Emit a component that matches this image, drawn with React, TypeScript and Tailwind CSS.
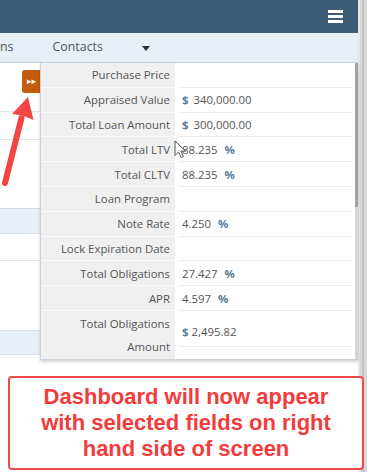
import React from "react";

type Row = { label: string; value?: string; pre?: string; suf?: string };

const rows: Row[] = [
  { label: "Purchase Price" },
  { label: "Appraised Value", pre: "$", value: "340,000.00" },
  { label: "Total Loan Amount", pre: "$", value: "300,000.00" },
  { label: "Total LTV", value: "88.235", suf: "%" },
  { label: "Total CLTV", value: "88.235", suf: "%" },
  { label: "Loan Program" },
  { label: "Note Rate", value: "4.250", suf: "%" },
  { label: "Lock Expiration Date" },
  { label: "Total Obligations", value: "27.427", suf: "%" },
  { label: "APR", value: "4.597", suf: "%" },
];

function Value({ row }: { row: Row }) {
  return (
    <span className="flex items-center">
      {row.pre && <span className="mr-[5px] font-bold text-[#5d7b97]">{row.pre}</span>}
      {row.value && <span>{row.value}</span>}
      {row.suf && <span className="ml-[7px] font-bold text-[#5d7b97]">{row.suf}</span>}
    </span>
  );
}

function DashboardPopup() {
  return (
    <div className="absolute left-[40px] top-[63px] flex h-[297px] w-[318px] border-b border-l border-[#c9d2db] bg-white shadow-[0_2px_3px_rgba(0,0,0,0.18)] font-['Open_Sans',sans-serif] text-[11.4px] text-[#555]">
      <div className="flex flex-1 flex-col">
        {rows.map((row) => (
          <div key={row.label} className="flex h-[24.8px]">
            <div className="flex w-[134px] items-center justify-end border-b border-[#fafafa] bg-[#f0f0f0] pr-[5px]">
              {row.label}
            </div>
            <div className="flex flex-1 px-[3px]">
              <div className="flex flex-1 items-center border-b border-[#ececec] pl-[4px]">
                <Value row={row} />
              </div>
            </div>
          </div>
        ))}
        <div className="flex flex-1">
          <div className="flex w-[134px] flex-col items-end justify-center bg-[#f0f0f0] pr-[5px] leading-[23px]">
            <span>Total Obligations</span>
            <span>Amount</span>
          </div>
          <div className="flex flex-1 flex-col px-[3px]">
            <div className="flex h-[36px] items-end border-b border-[#ececec] pb-[6px] pl-[4px] leading-[16px]">
              <span className="mr-[3px] font-bold text-[#5d7b97]">$</span>
              <span>2,495.82</span>
            </div>
          </div>
        </div>
      </div>
      <div className="flex w-[3px] flex-col bg-[#d6d6d6]">
        <div className="h-[144px] bg-[#a3a3a3]" />
      </div>
    </div>
  );
}

export default function App() {
  return (
    <div className="relative flex h-[472px] w-[367px] overflow-hidden bg-white">
      <div className="flex w-[358px] flex-col">
        {/* header */}
        <header className="flex h-[33px] items-center justify-end bg-[#3d5b75] pr-[15px]">
          <div className="flex w-[15px] flex-col gap-[2.5px]">
            <div className="h-[2.5px] bg-white" />
            <div className="h-[2.5px] bg-white" />
            <div className="h-[2.5px] bg-white" />
          </div>
        </header>

        {/* nav */}
        <nav className="flex h-[30px] items-center border-b border-[#c6d1db] bg-[#e7eef5] font-['Open_Sans',sans-serif] text-[12.4px] text-[#555]">
          <span>ns</span>
          <span className="ml-[39px]">Contacts</span>
          <span className="ml-[39px] mt-[1px] h-0 w-0 border-x-[4px] border-t-[5px] border-x-transparent border-t-[#1e3348]" />
        </nav>

        {/* page content behind the popup */}
        <div className="flex flex-1 flex-col">
          <div className="h-[49px] border-b border-[#e3e7eb] pl-[22px] pt-[7px]">
            <div className="flex h-[23px] w-[22px] items-center rounded-[3px] bg-[#c55b0c] pl-[5px] font-['DejaVu_Sans',sans-serif] text-[9px] font-bold leading-none text-white">
              ▸▸
            </div>
          </div>
          <div className="h-[28px] border-b border-[#e3e7eb]" />
          <div className="h-[68px]" />
          <div className="h-[26px] border-y border-[#d6dfe7] bg-[#e8eff6]" />
          <div className="h-[27px] border-b border-[#e3e7eb]" />
          <div className="h-[69px]" />
          <div className="h-[25px] border-y border-[#d6dfe7] bg-[#e8eff6]" />
          <div className="h-[28px] border-b border-[#eceff2]" />
        </div>
      </div>

      {/* window edge */}
      <div className="flex flex-1 bg-[#d9d9d9]">
        <div className="w-[2px] bg-[#e6e6e6]" />
        <div className="ml-[2px] w-[2px] bg-[#c2c2c2]" />
      </div>

      <DashboardPopup />

      {/* mouse pointer */}
      <svg className="absolute left-[174px] top-[140px]" width="13" height="19" viewBox="0 0 13 19">
        <path
          d="M1 1 L1 15.5 L4.6 12 L7.2 17.6 L9.4 16.6 L6.9 11.2 L11.5 11.2 Z"
          fill="#fff"
          stroke="#555"
          strokeWidth="1"
          strokeLinejoin="round"
        />
      </svg>

      {/* red annotation arrow */}
      <svg className="absolute left-0 top-[90px]" width="40" height="100" viewBox="0 0 40 100">
        <line x1="21.5" y1="28" x2="5" y2="93" stroke="#f24646" strokeWidth="6" strokeLinecap="round" />
        <path d="M28 7 L33.5 30 L22.4 25.5 L12 24 Z" fill="#f24646" />
      </svg>

      {/* callout */}
      <div className="absolute left-[8px] top-[376px] flex h-[94px] w-[356px] flex-col items-center justify-center rounded-[4px] border-2 border-[#f04a4a] bg-white text-center font-['Liberation_Sans',Arial,sans-serif] text-[22px] font-bold leading-[26px] text-[#f23c3c]">
        <span>Dashboard will now appear</span>
        <span>with selected fields on right</span>
        <span>hand side of screen</span>
      </div>
    </div>
  );
}
